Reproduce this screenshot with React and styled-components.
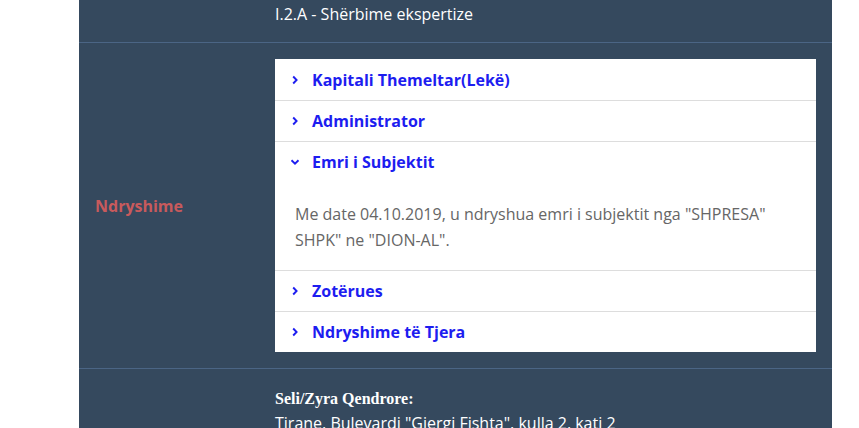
import styled, { createGlobalStyle } from "styled-components";
import React, { useState } from "react";

const GlobalStyle = createGlobalStyle`
  html, body {
    margin: 0;
    padding: 0;
    background: #ffffff;
  }
  body {
    font-family: "Open Sans", "Liberation Sans", sans-serif;
  }
`;

const sections = [
  { title: "Kapitali Themeltar(Lekë)" },
  { title: "Administrator" },
  {
    title: "Emri i Subjektit",
    body: 'Me date 04.10.2019, u ndryshua emri i subjektit nga "SHPRESA" SHPK" ne "DION-AL".',
  },
  { title: "Zotërues" },
  { title: "Ndryshime të Tjera" },
];

const Chevron = ({ open }) => (
  <StyledChevron viewBox="0 0 10 10" $open={open}>
    <path d="M3.2 1.5 L6.6 5 L3.2 8.5" fill="none" stroke="#1d1df0" strokeWidth="1.9" />
  </StyledChevron>
);

const AccordionItem = ({ title, body, defaultOpen = false }) => {
  const [isOpen, setIsOpen] = useState(defaultOpen);

  return (
    <StyledItem>
      <StyledHeader onClick={() => setIsOpen(!isOpen)}>
        <Chevron open={isOpen} />
        <StyledTitle>{title}</StyledTitle>
      </StyledHeader>
      {isOpen && body && <StyledBody>{body}</StyledBody>}
    </StyledItem>
  );
};

export const App = () => {
  return (
    <>
      <GlobalStyle />
      <StyledPage>
        <StyledPanel>
          <StyledRow $top>
            <StyledLabel />
            <StyledValue>I.2.A - Shërbime ekspertize</StyledValue>
          </StyledRow>
          <StyledRow>
            <StyledLabel>Ndryshime</StyledLabel>
            <StyledAccordion>
              {sections.map((section) => (
                <AccordionItem
                  key={section.title}
                  title={section.title}
                  body={section.body}
                  defaultOpen={!!section.body}
                />
              ))}
            </StyledAccordion>
          </StyledRow>
          <StyledRow $bottom>
            <StyledLabel />
            <StyledValue>
              <StyledAddressTitle>Seli/Zyra Qendrore:</StyledAddressTitle>
              Tirane, Bulevardi "Gjergi Fishta", kulla 2, kati 2
            </StyledValue>
          </StyledRow>
        </StyledPanel>
      </StyledPage>
    </>
  );
};
export default App;

const StyledPage = styled.div`
  display: flex;
  width: 859px;
  height: 428px;
  padding: 0 27px 0 79px;
  box-sizing: border-box;
  overflow: hidden;
`;

const StyledPanel = styled.div`
  display: flex;
  flex-direction: column;
  flex: 1;
  background: #35495e;
`;

const StyledRow = styled.div`
  display: grid;
  grid-template-columns: 196px 1fr;
  align-items: center;
  padding: ${(p) => (p.$top ? "2px 16px 16px 0" : p.$bottom ? "18px 16px 0 0" : "16px 16px 16px 0")};
  border-bottom: ${(p) => (p.$bottom ? "none" : "1px solid #4b6585")};
  flex-shrink: 0;
`;

const StyledLabel = styled.div`
  padding-left: 16px;
  color: #c85a5c;
  font-size: 16px;
  font-weight: 700;
  line-height: 24px;
`;

const StyledValue = styled.div`
  color: #ffffff;
  font-size: 16px;
  line-height: 24px;
`;

const StyledAddressTitle = styled.div`
  font-family: "Liberation Serif", "Times New Roman", serif;
  font-weight: 700;
  font-size: 16px;
  line-height: 24px;
`;

const StyledAccordion = styled.div`
  display: flex;
  flex-direction: column;
  padding-top: 1px;
  background: #ffffff;
`;

const StyledItem = styled.div`
  display: flex;
  flex-direction: column;
  border-bottom: 1px solid #dddddd;

  &:last-child {
    border-bottom: none;
  }
`;

const StyledHeader = styled.div`
  display: flex;
  height: 40px;
  padding-left: 15px;
  align-items: center;
  gap: 12px;
  cursor: pointer;
`;

const StyledChevron = styled.svg`
  width: 10px;
  height: 10px;
  flex-shrink: 0;
  transform: ${(p) => (p.$open ? "rotate(90deg)" : "none")};
`;

const StyledTitle = styled.div`
  color: #1d1df0;
  font-size: 16px;
  font-weight: 700;
  line-height: 22px;
`;

const StyledBody = styled.div`
  padding: 19px 40px 17px 20px;
  color: #666666;
  font-size: 16px;
  line-height: 26px;
`;
